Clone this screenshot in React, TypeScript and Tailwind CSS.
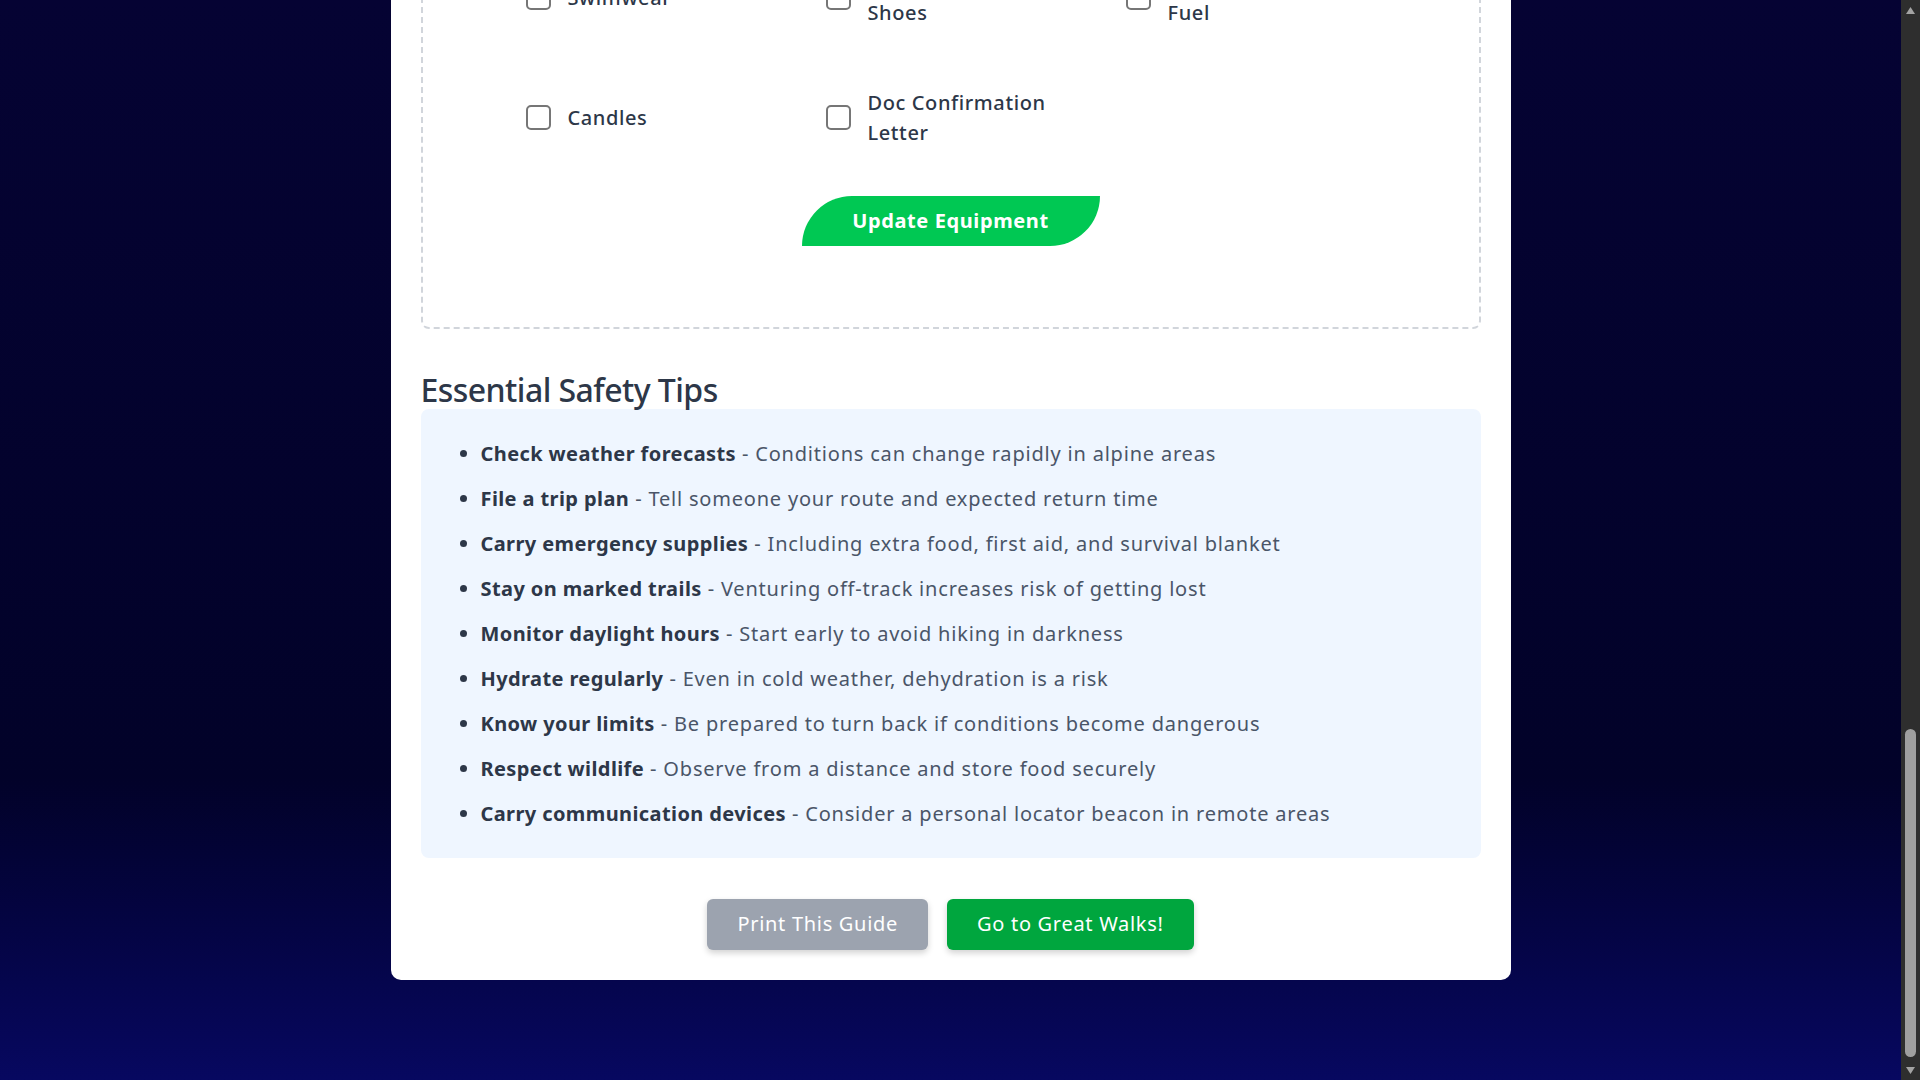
import { useEffect } from "react";

const TRACKS = [
  { name: "Milford Track", days: "4 days", km: "53.5 km" },
  { name: "Routeburn Track", days: "2–4 days", km: "33 km" },
  { name: "Kepler Track", days: "3–4 days", km: "60 km" },
  { name: "Abel Tasman Coast", days: "3–5 days", km: "60 km" },
  { name: "Heaphy Track", days: "4–6 days", km: "78.4 km" },
  { name: "Tongariro Northern", days: "3–4 days", km: "43 km" },
  { name: "Lake Waikaremoana", days: "3–4 days", km: "46 km" },
  { name: "Whanganui Journey", days: "3–5 days", km: "145 km" },
  { name: "Rakiura Track", days: "3 days", km: "32 km" },
  { name: "Paparoa Track", days: "2–3 days", km: "55 km" },
];

const WEATHER = [
  { label: "Summer", temp: "12–24°C", note: "Long days, busy huts" },
  { label: "Autumn", temp: "6–18°C", note: "Settled, cooler nights" },
  { label: "Winter", temp: "-2–10°C", note: "Snow and avalanche risk" },
  { label: "Spring", temp: "4–16°C", note: "Changeable, high rivers" },
];

const BOOKINGS = [
  ["Night 1", "Clinton Hut", "40 bunks", "Confirmed"],
  ["Night 2", "Mintaro Hut", "40 bunks", "Confirmed"],
  ["Night 3", "Dumpling Hut", "40 bunks", "Pending"],
  ["Transport", "Te Anau Downs", "Boat", "Confirmed"],
];

const EQUIPMENT = [
  "Hiking Boots",
  "Rain Jacket",
  "Warm Layers",
  "Sleeping Bag",
  "Sleeping Mat",
  "Backpack (60L)",
  "First Aid Kit",
  "Head Torch",
  "Water Bottles",
  "Cooking Pot & Utensils",
  "Insect Repellent",
  "Sunscreen",
  "Swimwear",
  "Comfortable Camp Shoes",
  "Camping Stove and Fuel",
  "Candles",
  "Doc Confirmation Letter",
];

const TIPS = [
  ["Check weather forecasts", "Conditions can change rapidly in alpine areas"],
  ["File a trip plan", "Tell someone your route and expected return time"],
  ["Carry emergency supplies", "Including extra food, first aid, and survival blanket"],
  ["Stay on marked trails", "Venturing off-track increases risk of getting lost"],
  ["Monitor daylight hours", "Start early to avoid hiking in darkness"],
  ["Hydrate regularly", "Even in cold weather, dehydration is a risk"],
  ["Know your limits", "Be prepared to turn back if conditions become dangerous"],
  ["Respect wildlife", "Observe from a distance and store food securely"],
  ["Carry communication devices", "Consider a personal locator beacon in remote areas"],
];

function SectionTitle({ children }: { children: React.ReactNode }) {
  return (
    <h2 className="text-[32px] leading-[38px] font-medium text-[#2d3748] tracking-[-0.55px]">{children}</h2>
  );
}

// the window's scrollbar, as the reference shows it
function Scrollbar() {
  return (
    <div className="fixed top-0 right-0 z-10 h-screen w-[19px] bg-[#2e2e2e]">
      <svg className="absolute top-[6px] left-[4px]" width="11" height="9" viewBox="0 0 11 9">
        <path d="M5.5 1 L10 8 L1 8 Z" fill="#a3a3a3" />
      </svg>
      <div className="absolute top-[729px] left-[4px] h-[328px] w-[11px] rounded-full bg-[#9f9f9f]" />
      <svg className="absolute bottom-[5px] left-[4px]" width="11" height="9" viewBox="0 0 11 9">
        <path d="M1 1 L10 1 L5.5 8 Z" fill="#a3a3a3" />
      </svg>
    </div>
  );
}

export default function App() {
  useEffect(() => {
    document.documentElement.classList.add("scheme-dark");
    const go = () => window.scrollTo(0, document.documentElement.scrollHeight);
    go();
    requestAnimationFrame(go);
    const t = setTimeout(go, 60);
    return () => clearTimeout(t);
  }, []);

  return (
    <div className="min-h-screen bg-fixed bg-linear-to-b from-[#050333] via-[#020229] via-72% to-[#070860] pt-[100px] pr-[19px] pb-[100px] font-['Noto_Sans',_'Open_Sans',_sans-serif] scheme-light">
      <Scrollbar />
      <div className="mx-auto w-[1120px] rounded-[10px] bg-white p-[30px]">
        {/* header */}
        <h1 className="text-[40px] leading-[48px] font-bold text-[#1a365d]">Great Walks Preparation Guide</h1>
        <p className="mt-[10px] text-[20px] leading-[30px] text-[#4a5568]">
          Plan your New Zealand Great Walk with confidence – pick a track, book your huts and pack the right gear.
        </p>

        <div className="mt-[40px]">
          <SectionTitle>Choose Your Track</SectionTitle>
          <div className="mt-[20px] grid grid-cols-5 gap-[20px]">
            {TRACKS.map((t) => (
              <div key={t.name} className="h-[120px] rounded-[8px] border border-[#e2e8f0] bg-[#f7fafc] p-[15px]">
                <div className="text-[18px] leading-[26px] font-semibold text-[#2d3748]">{t.name}</div>
                <div className="mt-[8px] text-[16px] leading-[24px] text-[#4a5568]">{t.days}</div>
                <div className="text-[16px] leading-[24px] text-[#4a5568]">{t.km}</div>
              </div>
            ))}
          </div>
        </div>

        <div className="mt-[40px]">
          <SectionTitle>Trip Details</SectionTitle>
          <div className="mt-[20px] grid grid-cols-2 gap-x-[30px] gap-y-[20px]">
            {["Start Date", "Number of Nights", "Group Size", "Emergency Contact"].map((l) => (
              <label key={l} className="flex flex-col gap-[8px]">
                <span className="text-[20px] leading-[30px] font-medium text-[#2d3748]">{l}</span>
                <input className="h-[50px] rounded-[6px] border border-[#cbd5e0] px-[15px] text-[18px]" />
              </label>
            ))}
          </div>
        </div>

        <div className="mt-[40px]">
          <SectionTitle>Weather &amp; Conditions</SectionTitle>
          <div className="mt-[20px] grid grid-cols-4 gap-[20px]">
            {WEATHER.map((w) => (
              <div key={w.label} className="h-[160px] rounded-[8px] bg-[#ebf8ff] p-[20px]">
                <div className="text-[20px] leading-[30px] font-semibold text-[#2b6cb0]">{w.label}</div>
                <div className="mt-[10px] text-[28px] leading-[36px] font-bold text-[#2d3748]">{w.temp}</div>
                <div className="mt-[6px] text-[16px] leading-[24px] text-[#4a5568]">{w.note}</div>
              </div>
            ))}
          </div>
        </div>

        <div className="mt-[40px]">
          <SectionTitle>Hut &amp; Campsite Bookings</SectionTitle>
          <table className="mt-[20px] w-full text-left text-[18px]">
            <thead className="bg-[#edf2f7] text-[#2d3748]">
              <tr className="h-[50px]">
                <th className="px-[15px]">Stage</th>
                <th className="px-[15px]">Location</th>
                <th className="px-[15px]">Capacity</th>
                <th className="px-[15px]">Status</th>
              </tr>
            </thead>
            <tbody className="text-[#4a5568]">
              {BOOKINGS.map((b) => (
                <tr key={b[0]} className="h-[50px] border-b border-[#e2e8f0]">
                  {b.map((c, i) => (
                    <td key={i} className="px-[15px]">
                      {c}
                    </td>
                  ))}
                </tr>
              ))}
            </tbody>
          </table>
        </div>

        <div className="mt-[40px]">
          <SectionTitle>Equipment Checklist</SectionTitle>
          <div className="mt-[20px] rounded-[8px] border-2 border-dashed border-[#d1d5db] pt-[40px] pb-[81px]">
            <div className="mx-auto grid w-[900px] grid-cols-3 gap-y-[60px]">
              {EQUIPMENT.map((item) => (
                <label key={item} className="flex min-h-[60px] items-center gap-[17px] pl-[25px]">
                  <input
                    type="checkbox"
                    className="h-[25px] w-[25px] shrink-0 appearance-none rounded-[5px] border-2 border-[#767676] bg-white"
                  />
                  <span className="w-[205px] text-[20px] leading-[30px] font-medium text-[#2d3748] tracking-[0.6px]">
                    {item}
                  </span>
                </label>
              ))}
            </div>
            <div className="mt-[48px] flex justify-center">
              <button className="h-[50px] w-[298px] rounded-tl-[50px] rounded-br-[50px] bg-[#00c853] text-[20px] font-bold text-white tracking-[0.6px]">
                Update Equipment
              </button>
            </div>
          </div>
        </div>

        <div className="mt-[42px]">
          <SectionTitle>Essential Safety Tips</SectionTitle>
          <div className="rounded-[8px] bg-[#eff6ff] px-[20px] pt-[30px] pb-[29px]">
            <ul className="flex list-disc flex-col gap-[15px] pl-[40px] text-[20px] leading-[30px] text-[#4a5568] tracking-[0.8px] marker:text-[#2d3748]">
              {TIPS.map(([b, t]) => (
                <li key={b}>
                  <strong className="font-bold text-[#2d3748] tracking-[0.4px]">{b}</strong> - {t}
                </li>
              ))}
            </ul>
          </div>
        </div>

        <div className="mt-[41px] flex justify-center gap-[19px]">
          <button className="h-[51px] rounded-[6px] bg-[#9ca3af] px-[30px] text-[20px] text-white tracking-[0.7px] shadow-[0_3px_6px_rgba(0,0,0,0.18)]">
            Print This Guide
          </button>
          <button className="h-[51px] rounded-[6px] bg-[#00a63e] px-[30px] text-[20px] text-white tracking-[0.7px] shadow-[0_3px_6px_rgba(0,0,0,0.18)]">
            Go to Great Walks!
          </button>
        </div>
      </div>
    </div>
  );
}
